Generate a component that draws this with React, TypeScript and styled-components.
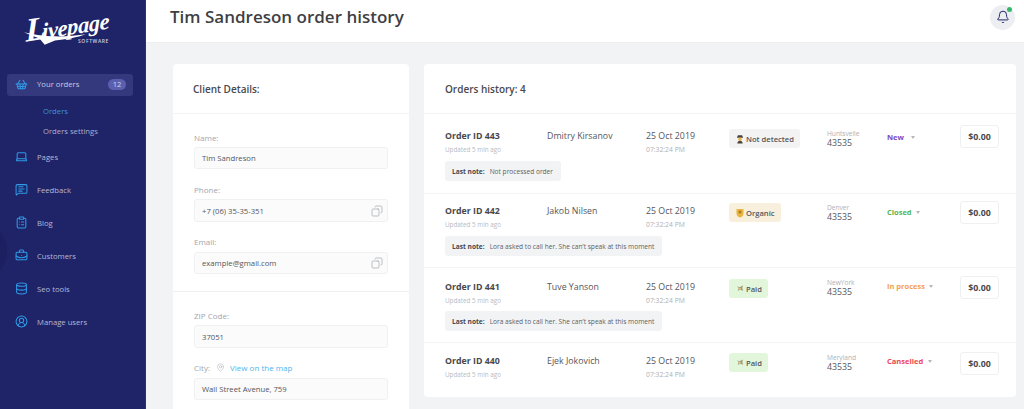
import React from "react";
import styled, { createGlobalStyle } from "styled-components";
import { ShoppingBasket, Laptop, MessageSquareText, ClipboardList, BriefcaseBusiness, Database, CircleUserRound, Bell, Copy, MapPin } from "lucide-react";

const Global = createGlobalStyle`
  html, body { margin: 0; padding: 0; height: 100%; overflow: hidden; }
  body { font-family: "Open Sans", "Liberation Sans", sans-serif; background: #f2f3f5; color: #4a4a4f; }
  * { box-sizing: border-box; }
`;
const Shell = styled.div`display: flex; height: 100vh; overflow: hidden;`;
const Sidebar = styled.aside`
  position: relative; width: 146px; flex: none; background: #1f2367; overflow: hidden;
  border-right: 1px solid #2c3074; padding: 0 12px 0 7px;
`;
const SideBlob = styled.div`
  position: absolute; left: -55px; top: 220px; width: 62px; height: 62px; border-radius: 50%; background: #1c2060;
`;
const LogoBox = styled.div`height: 74px; position: relative;`;
const LogoWord = styled.div`
  position: absolute; left: 18px; top: 14px;
  font-family: "Liberation Serif", serif; font-style: italic; font-weight: 700; font-size: 22.5px; line-height: 20px; color: #fff;
  letter-spacing: -0.3px; white-space: nowrap; transform: rotate(-9deg) skewX(-8deg);
`;
const LogoCap = styled.span`font-size: 33px; margin-right: -3px;`;
const LogoSwoosh = styled.svg`position: absolute; left: 17px; top: 32px;`;
const LogoSub = styled.div`position: absolute; left: 71px; top: 38px; font-size: 5px; line-height: 7px; font-weight: 600; letter-spacing: .6px; color: #cfd0e4;`;
const NavActive = styled.div`
  height: 22px; background: #34387d; border-radius: 3px; display: flex; align-items: center; padding: 0 7px 2px 8px; color: #c9cbe3; font-size: 7.7px;
`;
const NavIcon = styled.span`display: flex; width: 22px; flex: none; color: #2f9be8;`;
const NavCount = styled.span`
  margin-left: auto; background: #5a5fb0; color: #d7d8ee; font-size: 7.5px; border-radius: 6px; height: 11px; line-height: 11px; width: 18px; text-align: center;
`;
const SubNav = styled.div`padding: 5px 0 0 36px; display: flex; flex-direction: column;`;
const SubItem = styled.div<{ $on?: boolean }>`height: 20px; line-height: 20px; font-size: 7.7px; color: ${p => (p.$on ? "#3d93dc" : "#aeb0cf")};`;
const NavItem = styled.div`height: 33px; display: flex; align-items: center; padding: 0 0 2px 8px; color: #b7b9d6; font-size: 7.7px;`;
const NavList = styled.div``;

const Main = styled.main`flex: 1; min-width: 0; display: flex; flex-direction: column;`;
const Header = styled.header`height: 43px; flex: none; background: #fff; display: flex; align-items: center; justify-content: space-between; padding: 0 9px 8px 24px; border-bottom: 1px solid #eceef0;`;
const Title = styled.h1`margin: 0; font-size: 17px; font-weight: 600; color: #3f3f44; line-height: 24px;`;
const BellWrap = styled.div`position: relative; width: 25px; height: 25px; border-radius: 50%; background: #eceef1; display: flex; align-items: center; justify-content: center; color: #1f2367;`;
const BellDot = styled.span`position: absolute; top: 2px; right: 3px; width: 5px; height: 5px; border-radius: 50%; background: #35b86b;`;
const Content = styled.div`flex: 1; display: flex; gap: 15px; padding: 21px 8px 0 27px; align-items: flex-start;`;
const Card = styled.section`background: #fff; border-radius: 4px;`;
const ClientCard = styled(Card)`width: 236px; flex: none; height: 380px;`;
const OrdersCard = styled(Card)`flex: 1; min-width: 0; height: 333px;`;
const CardHead = styled.div<{ $pl: number }>`
  height: 50px; padding-left: ${p => p.$pl}px; display: flex; align-items: center; font-size: 10px; font-weight: 600; color: #48484d; border-bottom: 1px solid #f2f3f5;
`;
const FieldGroup = styled.div<{ $pb?: number; $rule?: boolean }>`
  padding: 16.5px 21px ${p => p.$pb ?? 0}px; border-bottom: ${p => (p.$rule ? "1px solid #eff0f2" : "none")};
`;
const Field = styled.div`margin-bottom: 13.6px; &:last-child { margin-bottom: 0; }`;
const LabelRow = styled.div`display: flex; align-items: center; height: 13px; margin-bottom: 3.5px; font-size: 8px; color: #a3a5ab; line-height: 13px;`;
const MapLink = styled.span`display: inline-flex; align-items: center; gap: 5px; margin-left: 6px; color: #4fb5ee; font-size: 8px;`;
const MapIcon = styled.span`display: flex; color: #a9acb2;`;
const InputBox = styled.div`
  height: 22.4px; background: #fbfbfb; border: 1px solid #eff0f2; border-radius: 3px; display: flex; align-items: center; justify-content: space-between; padding: 0 4px 0 7px; font-size: 7.7px; color: #55565b;
`;
const CopyIcon = styled.span`display: flex; color: #a5a7ac; transform: scaleX(-1);`;

const Row = styled.div<{ $pt: number; $h: number; $last?: boolean }>`
  height: ${p => p.$h}px; padding: ${p => p.$pt}px 17px 0 21px; border-bottom: ${p => (p.$last ? "none" : "1px solid #f3f4f5")};
`;
const RowGrid = styled.div`display: grid; grid-template-columns: 102px 99px 83px 98px 60px 73px 39px; align-items: start;`;
const TextCell = styled.div<{ $pt: number }>`padding-top: ${p => p.$pt}px;`;
const OrderId = styled.div`font-size: 8.8px; font-weight: 700; color: #48484d; line-height: 13px;`;
const Muted = styled.div`font-size: 6.3px; color: #b9bbc0; line-height: 10px; margin-top: 2px;`;
const NameCell = styled(TextCell)`font-size: 8.8px; line-height: 13px; color: #55565b;`;
const DateSub = styled.div`font-size: 6.8px; color: #aeb0b5; line-height: 10px; margin-top: 2px;`;
const Badge = styled.div<{ $bg: string; $mt: number }>`
  display: inline-flex; align-items: center; gap: 2px; height: 19px; margin-top: ${p => p.$mt}px; padding: 0 6px 0 7px; border-radius: 3px; background: ${p => p.$bg}; font-size: 7.6px; font-weight: 600; color: #55565b; white-space: nowrap;
`;
const CityName = styled.div`font-size: 6.6px; line-height: 9px; color: #aeb0b5;`;
const Zip = styled.div`font-size: 8.8px; line-height: 11px; color: #55565b;`;
const Status = styled.div<{ $c: string; $pt: number }>`display: flex; align-items: center; padding-top: ${p => p.$pt}px; font-size: 7.5px; line-height: 13px; font-weight: 700; color: ${p => p.$c};`;
const Caret = styled.span<{ $gap: number }>`margin-left: ${p => p.$gap}px; width: 0; height: 0; border-left: 2.5px solid transparent; border-right: 2.5px solid transparent; border-top: 3px solid #b4b6bb;`;
const Price = styled.div<{ $mt: number }>`height: 23px; margin-top: ${p => p.$mt}px; border: 1px solid #eff0f2; border-radius: 3px; background: #fff; display: flex; align-items: center; justify-content: center; font-size: 8.8px; font-weight: 700; color: #48484d;`;
const Note = styled.div<{ $mt: number }>`
  display: flex; width: fit-content; align-items: center; height: 20px; margin-top: ${p => p.$mt}px; padding: 0 8px 0 7px; background: #f2f3f5; border-radius: 3px; font-size: 6.6px; color: #5d5e63; white-space: nowrap;
`;
const NoteKey = styled.b`font-weight: 700; color: #48484d; margin-right: 5px;`;

const Spy = () => (
  <svg width="8" height="10" viewBox="0 0 9 10"><path d="M1 3.6h7L6.8.8H2.2z" fill="#4a4238"/><circle cx="4.5" cy="5.2" r="2" fill="#e9b64b"/><path d="M1.5 10c0-2 1.3-3 3-3s3 1 3 3z" fill="#4a4238"/></svg>
);
const Shield = () => (
  <svg width="8" height="10" viewBox="0 0 8 10"><path d="M0.5 1h7v4.4C7.5 7.6 5.8 9 4 9.6 2.2 9 .5 7.6.5 5.4z" fill="#e9b43f"/><circle cx="4" cy="4" r="1.5" fill="#a87a1e"/></svg>
);
const Money = () => (
  <svg width="8" height="9" viewBox="0 0 9 9"><path d="M1 2l3 1 4-2-1 3 1 3-3-1-3 1 1-3z" fill="#9c9a78"/><path d="M3 3.5l3 .6-1 2-2.4-.5z" fill="#d9c18a"/></svg>
);

type O = { id: string; name: string; badge: string; bg: string; icon: React.ReactNode; city: string; status: string; color: string; gap: number; note?: string; pt: number; h: number; noteMt: number; priceMt: number; badgeMt: number; cityPt: number; statusPt: number; textPt: number; last?: boolean };
const note2 = "Lora asked to call her. She can’t speak at this moment";
const orders: O[] = [
  { id: "443", name: "Dmitry Kirsanov", badge: "Not detected", bg: "#f3f3f4", icon: <Spy />, city: "Huntsvelle", status: "New", color: "#7c46c4", gap: 7, note: "Not processed order", pt: 10, h: 80, noteMt: 6, priceMt: 1, badgeMt: 5, cityPt: 4.5, statusPt: 6.5, textPt: 6 },
  { id: "442", name: "Jakob Nilsen", badge: "Organic", bg: "#f8f0dd", icon: <Shield />, city: "Denver", status: "Closed", color: "#54b558", gap: 4, note: note2, pt: 5.5, h: 74, noteMt: 6.5, priceMt: 1.5, badgeMt: 3.5, cityPt: 3, statusPt: 6, textPt: 5 },
  { id: "441", name: "Tuve Yanson", badge: "Paid", bg: "#e2f6dc", icon: <Money />, city: "NewYork", status: "In process", color: "#f5a04a", gap: 4, note: note2, pt: 6.5, h: 75, noteMt: 5.5, priceMt: 1.5, badgeMt: 4.5, cityPt: 3, statusPt: 5.5, textPt: 6 },
  { id: "440", name: "Ejek Jokovich", badge: "Paid", bg: "#e2f6dc", icon: <Money />, city: "Meryland", status: "Canselled", color: "#ee4455", gap: 5, pt: 6.5, h: 54, noteMt: 0, priceMt: 2.5, badgeMt: 3.5, cityPt: 3, statusPt: 5, textPt: 5, last: true },
];

const nav = [
  { t: "Pages", I: Laptop },
  { t: "Feedback", I: MessageSquareText },
  { t: "Blog", I: ClipboardList },
  { t: "Customers", I: BriefcaseBusiness },
  { t: "Seo tools", I: Database },
  { t: "Manage users", I: CircleUserRound },
];

export default function App() {
  return (
    <Shell>
      <Global />
      <Sidebar>
        <SideBlob />
        <LogoBox>
          <LogoWord><LogoCap>L</LogoCap>ivepage</LogoWord>
          <LogoSwoosh width="62" height="13" viewBox="0 0 60 12"><path d="M0 0 C12 3 24 4 34 4 C42 4 52 3 60 2 C52 5 40 7 30 8 L20 12 L15 6 C10 4 4 2 0 0z" fill="#fff" /></LogoSwoosh>
          <LogoSub>SOFTWARE</LogoSub>
        </LogoBox>
        <NavActive>
          <NavIcon><ShoppingBasket size={13} strokeWidth={1.9} /></NavIcon>
          Your orders
          <NavCount>12</NavCount>
        </NavActive>
        <SubNav>
          <SubItem $on>Orders</SubItem>
          <SubItem>Orders settings</SubItem>
        </SubNav>
        <NavList>
          {nav.map(({ t, I }) => (
            <NavItem key={t}><NavIcon><I size={13} strokeWidth={1.9} /></NavIcon>{t}</NavItem>
          ))}
        </NavList>
      </Sidebar>
      <Main>
        <Header>
          <Title>Tim Sandreson order history</Title>
          <BellWrap><Bell size={14} strokeWidth={1.7} /><BellDot /></BellWrap>
        </Header>
        <Content>
          <ClientCard>
            <CardHead $pl={20}>Client Details:</CardHead>
            <FieldGroup $pb={17} $rule>
              <Field><LabelRow>Name:</LabelRow><InputBox>Tim Sandreson</InputBox></Field>
              <Field><LabelRow>Phone:</LabelRow><InputBox>+7 (06) 35-35-351<CopyIcon><Copy size={12} strokeWidth={1.4} /></CopyIcon></InputBox></Field>
              <Field><LabelRow>Email:</LabelRow><InputBox>example@gmail.com<CopyIcon><Copy size={12} strokeWidth={1.4} /></CopyIcon></InputBox></Field>
            </FieldGroup>
            <FieldGroup>
              <Field><LabelRow>ZIP Code:</LabelRow><InputBox>37051</InputBox></Field>
              <Field><LabelRow>City:<MapLink><MapIcon><MapPin size={9} strokeWidth={1.4} /></MapIcon>View on the map</MapLink></LabelRow><InputBox>Wall Street Avenue, 759</InputBox></Field>
            </FieldGroup>
          </ClientCard>
          <OrdersCard>
            <CardHead $pl={21}>Orders history: 4</CardHead>
            {orders.map(o => (
              <Row key={o.id} $pt={o.pt} $h={o.h} $last={o.last}>
                <RowGrid>
                  <TextCell $pt={o.textPt}>
                    <OrderId>Order ID {o.id}</OrderId>
                    <Muted>Updated 5 min ago</Muted>
                  </TextCell>
                  <NameCell $pt={o.textPt}>{o.name}</NameCell>
                  <NameCell $pt={o.textPt}>25 Oct 2019<DateSub>07:32:24 PM</DateSub></NameCell>
                  <div><Badge $bg={o.bg} $mt={o.badgeMt}>{o.icon}{o.badge}</Badge></div>
                  <TextCell $pt={o.cityPt}><CityName>{o.city}</CityName><Zip>43535</Zip></TextCell>
                  <Status $c={o.color} $pt={o.statusPt}>{o.status}<Caret $gap={o.gap} /></Status>
                  <Price $mt={o.priceMt}>$0.00</Price>
                </RowGrid>
                {o.note && <Note $mt={o.noteMt}><NoteKey>Last note:</NoteKey>{o.note}</Note>}
              </Row>
            ))}
          </OrdersCard>
        </Content>
      </Main>
    </Shell>
  );
}
